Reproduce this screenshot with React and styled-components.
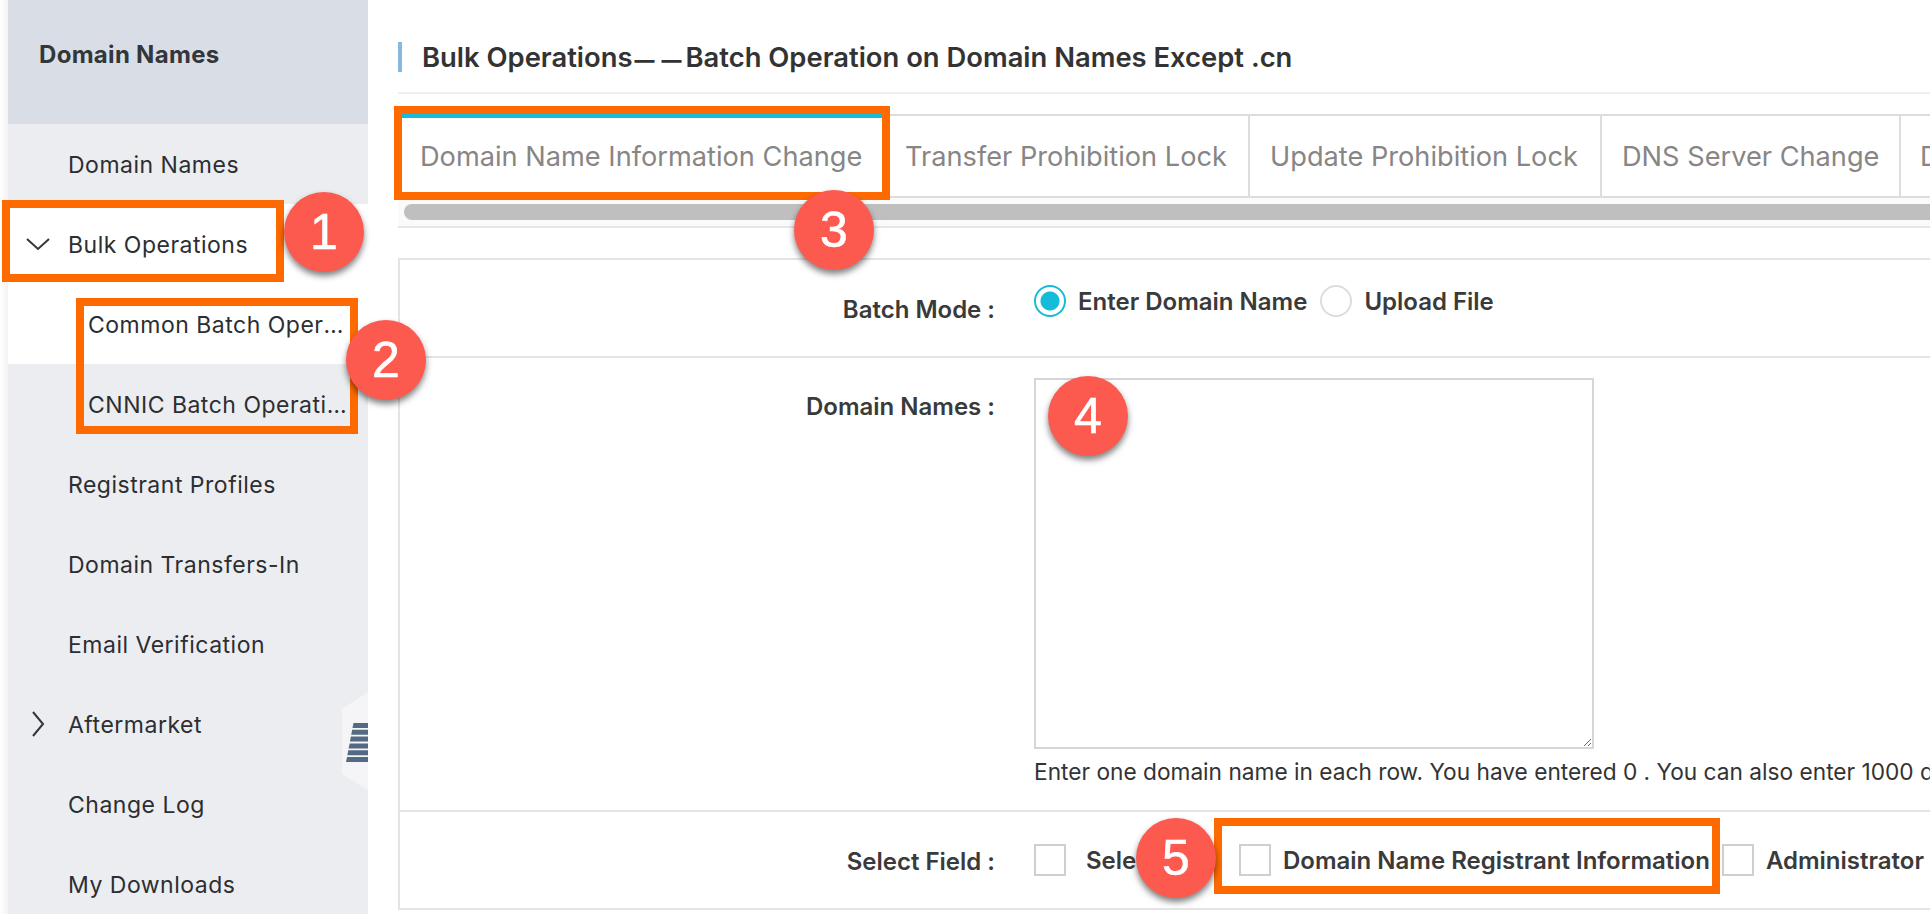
import styled, { createGlobalStyle } from "styled-components";

const GlobalStyle = createGlobalStyle`
  html, body {
    margin: 0;
    padding: 0;
    background: #fff;
  }
  * {
    box-sizing: border-box;
  }
`;

const Page = styled.div`
  position: relative;
  display: flex;
  width: 1930px;
  height: 914px;
  overflow: hidden;
  background: #fff;
  font-family: Inter, "Liberation Sans", sans-serif;
`;

const Gutter = styled.div`
  flex: 0 0 8px;
  background: linear-gradient(90deg, #fff, #f3f3f5);
`;

const Sidebar = styled.aside`
  position: relative;
  flex: 0 0 360px;
  background: #ebedf1;
`;

const SidebarTitle = styled.div`
  height: 124px;
  padding: 40px 0 0 31px;
  background: #d9dee6;
  color: #33363b;
  font-size: 24px;
  line-height: 30px;
  font-weight: 700;
  letter-spacing: 0.3px;
`;

const MenuItem = styled.div`
  display: flex;
  align-items: center;
  height: 80px;
  padding-left: ${(p) => (p.$sub ? "80px" : "6px")};
  background: ${(p) => (p.$active ? "#fff" : "transparent")};
  color: #2c2e32;
  font-size: 23px;
  letter-spacing: 0.5px;
`;

const IconSlot = styled.span`
  display: flex;
  flex: 0 0 54px;
  justify-content: center;
  padding-right: 6px;
`;

const MenuLabel = styled.span`
  max-width: 260px;
  padding-top: 2px;
  overflow: hidden;
  white-space: nowrap;
  text-overflow: ellipsis;
`;

const Handle = styled.svg`
  position: absolute;
  right: 0;
  top: 692px;
`;

const Main = styled.main`
  flex: 1;
  min-width: 0;
  padding-left: 30px;
  overflow: hidden;
`;

const TitleRow = styled.div`
  height: 94px;
  padding-top: 42px;
  border-bottom: 2px solid #eeeeee;
`;

const Title = styled.h1`
  margin: 0;
  height: 30px;
  padding-left: 20px;
  border-left: 4px solid #85b8e0;
  color: #333;
  font-size: 27.4px;
  line-height: 30px;
  font-weight: 600;
  white-space: nowrap;
`;

const TitleDash = styled.span`
  margin: 0 -3px 0 2px;
  font-size: 20px;
  font-weight: 800;
  letter-spacing: 7px;
`;

const Tabs = styled.div`
  display: flex;
  margin-top: 20px;
  height: 84px;
  border-top: 2px solid #ddd;
  border-bottom: 2px solid #ddd;
  white-space: nowrap;
`;

const Tab = styled.div`
  display: flex;
  flex: 0 0 auto;
  align-items: center;
  width: ${(p) => p.$width}px;
  padding-left: ${(p) => p.$pad}px;
  padding-bottom: ${(p) => (p.$active ? "2px" : "0")};
  margin-top: ${(p) => (p.$active ? "-2px" : "0")};
  border-right: 2px solid #ddd;
  border-top: ${(p) => (p.$active ? "4px solid #15bcd9" : "0")};
  color: #888585;
  font-size: 27.2px;
`;

const ScrollTrack = styled.div`
  height: 30px;
  padding: 6px 0 0 6px;
  background: #fafafa;
  border-bottom: 2px solid #e6e6e6;
`;

const ScrollThumb = styled.div`
  height: 16px;
  margin-right: -20px;
  border-radius: 8px;
  background: #bfbfbf;
`;

const Form = styled.section`
  margin-top: 30px;
  border-top: 2px solid #e4e4e4;
  border-left: 2px solid #e4e4e4;
`;

const FormRow = styled.div`
  display: grid;
  grid-template-columns: 595px 1fr;
  column-gap: 39px;
  height: ${(p) => p.$height}px;
  border-bottom: 2px solid #e4e4e4;
`;

const FieldLabel = styled.div`
  padding-top: ${(p) => p.$top}px;
  text-align: right;
  color: #3a3a3a;
  font-size: 24px;
  line-height: 28px;
  font-weight: 600;
`;

const Controls = styled.div`
  display: flex;
  align-items: center;
  min-width: 0;
  height: ${(p) => p.$height}px;
  white-space: nowrap;
`;

const Radio = styled.input.attrs({ type: "radio", name: "batch-mode" })`
  appearance: none;
  flex: 0 0 32px;
  width: 32px;
  height: 32px;
  margin: 0;
  border-radius: 50%;
  border: 2px solid #ddd;
  background: #fff;

  &:checked {
    border-color: #15bcd9;
    background: radial-gradient(circle, #15bcd9 0 9px, #fff 10px);
  }
`;

const Checkbox = styled.input.attrs({ type: "checkbox" })`
  appearance: none;
  flex: 0 0 32px;
  width: 32px;
  height: 32px;
  margin: 0;
  border: 2px solid #cfcfcf;
  background: #fff;
`;

const OptionText = styled.span`
  flex: 0 0 ${(p) => (p.$width ? `${p.$width}px` : "auto")};
  margin: 0 ${(p) => p.$after ?? 12}px 0 ${(p) => p.$before ?? 12}px;
  color: #3a3a3a;
  font-size: 24px;
  font-weight: 600;
`;

const DomainInput = styled.textarea`
  display: block;
  width: 560px;
  height: 371px;
  margin: 20px 0 0;
  border: 2px solid #d6d6d6;
  background: #fff;
  resize: both;
  outline: none;
`;

const Hint = styled.div`
  margin-top: 10px;
  color: #333;
  font-size: 22.7px;
  line-height: 26px;
  white-space: nowrap;
`;

const Marker = styled.div`
  position: absolute;
  left: ${(p) => p.$x}px;
  top: ${(p) => p.$y}px;
  width: ${(p) => p.$w}px;
  height: ${(p) => p.$h}px;
  border: 8px solid #ff6a00;
`;

const Badge = styled.div`
  position: absolute;
  left: ${(p) => p.$x - 40}px;
  top: ${(p) => p.$y - 40}px;
  display: flex;
  align-items: center;
  justify-content: center;
  width: 80px;
  height: 80px;
  border-radius: 50%;
  background: #fd5a4f;
  box-shadow: 0 4px 6px rgba(0, 0, 0, 0.5);
  color: #fff;
  font-family: "Liberation Sans", Arial, sans-serif;
  font-size: 50px;
  -webkit-text-stroke: 0.6px #fff;
`;

const menu = [
  { label: "Domain Names" },
  { label: "Bulk Operations", icon: "down", active: true },
  { label: "Common Batch Operations", sub: true, active: true },
  { label: "CNNIC Batch Operations", sub: true },
  { label: "Registrant Profiles" },
  { label: "Domain Transfers-In" },
  { label: "Email Verification" },
  { label: "Aftermarket", icon: "right" },
  { label: "Change Log" },
  { label: "My Downloads" },
];

const tabs = [
  { label: "Domain Name Information Change", width: 488, pad: 22, active: true },
  { label: "Transfer Prohibition Lock", width: 364, pad: 19 },
  { label: "Update Prohibition Lock", width: 352, pad: 20 },
  { label: "DNS Server Change", width: 299, pad: 20 },
  { label: "DNS Synchronization", width: 300, pad: 19 },
];

const markers = [
  { x: 2, y: 200, w: 282, h: 82 },
  { x: 76, y: 298, w: 282, h: 136 },
  { x: 394, y: 106, w: 496, h: 94 },
  { x: 1214, y: 818, w: 506, h: 76 },
];

const badges = [
  { n: 1, x: 324, y: 232 },
  { n: 2, x: 386, y: 360 },
  { n: 3, x: 834, y: 230 },
  { n: 4, x: 1088, y: 416 },
  { n: 5, x: 1176, y: 858 },
];

function Chevron({ dir }) {
  if (dir === "down") {
    return (
      <svg width="24" height="14" viewBox="0 0 24 14" fill="none">
        <polyline points="1,2 12,12 23,2" stroke="#33363b" strokeWidth="2" />
      </svg>
    );
  }
  return (
    <svg width="14" height="26" viewBox="0 0 14 26" fill="none">
      <polyline points="2,1 12,13 2,25" stroke="#33363b" strokeWidth="2" />
    </svg>
  );
}

function CollapseHandle() {
  const stripes = [0, 1, 2, 3, 4, 5];
  return (
    <Handle width="26" height="98" viewBox="0 0 26 98">
      <polygon points="26,0 0,17 0,82 26,98" fill="#f5f5f7" />
      {stripes.map((i) => (
        <polygon
          key={i}
          points={`${11.5 - i * 1.3},${31 + i * 6.8} 26,${31 + i * 6.8} 26,${36 + i * 6.8} ${10.5 - i * 1.3},${36 + i * 6.8}`}
          fill="#536a82"
        />
      ))}
    </Handle>
  );
}

export default function App() {
  return (
    <Page>
      <GlobalStyle />
      <Gutter />
      <Sidebar>
        <SidebarTitle>Domain Names</SidebarTitle>
        {menu.map((item) => (
          <MenuItem key={item.label} $sub={item.sub} $active={item.active}>
            {!item.sub && <IconSlot>{item.icon && <Chevron dir={item.icon} />}</IconSlot>}
            <MenuLabel>{item.label}</MenuLabel>
          </MenuItem>
        ))}
        <CollapseHandle />
      </Sidebar>
      <Main>
        <TitleRow>
          <Title>
            Bulk Operations<TitleDash>——</TitleDash>Batch Operation on Domain Names Except .cn
          </Title>
        </TitleRow>
        <Tabs>
          {tabs.map((tab) => (
            <Tab key={tab.label} $width={tab.width} $pad={tab.pad} $active={tab.active}>
              {tab.label}
            </Tab>
          ))}
        </Tabs>
        <ScrollTrack>
          <ScrollThumb />
        </ScrollTrack>
        <Form>
          <FormRow $height={98}>
            <FieldLabel $top={36}>Batch Mode :</FieldLabel>
            <Controls $height={82}>
              <Radio defaultChecked />
              <OptionText $after={13}>Enter Domain Name</OptionText>
              <Radio />
              <OptionText>Upload File</OptionText>
            </Controls>
          </FormRow>
          <FormRow $height={454}>
            <FieldLabel $top={35}>Domain Names :</FieldLabel>
            <div>
              <DomainInput />
              <Hint>
                Enter one domain name in each row. You have entered 0 . You can also enter 1000 domain names.
              </Hint>
            </div>
          </FormRow>
          <FormRow $height={98}>
            <FieldLabel $top={36}>Select Field :</FieldLabel>
            <Controls $height={96}>
              <Checkbox />
              <OptionText $before={20} $after={0} $width={153}>Select All</OptionText>
              <Checkbox />
              <OptionText>Domain Name Registrant Information</OptionText>
              <Checkbox />
              <OptionText>Administrator Information</OptionText>
            </Controls>
          </FormRow>
        </Form>
      </Main>
      {markers.map((m) => (
        <Marker key={m.x} $x={m.x} $y={m.y} $w={m.w} $h={m.h} />
      ))}
      {badges.map((b) => (
        <Badge key={b.n} $x={b.x} $y={b.y}>
          {b.n}
        </Badge>
      ))}
    </Page>
  );
}
